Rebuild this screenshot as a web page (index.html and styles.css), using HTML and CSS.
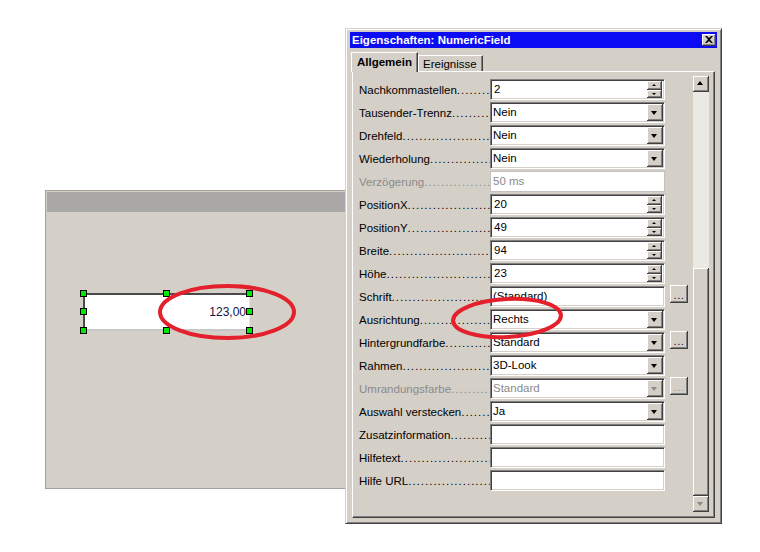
FILE: index.html
```html
<!DOCTYPE html>
<html lang="de">
  <head>
    <meta charset="UTF-8" />
    <title>Eigenschaften: NumericField</title>
    <link rel="stylesheet" href="styles.css">
  </head>
  <body>
    <!-- Formular-Entwurf -->
    <div class="designer">
      <div class="ruler"></div>
      <div class="canvas">
        <div class="ctl">
          <div class="numfield">123,00</div>
          <i class="handle h-tl"></i><i class="handle h-tc"></i><i class="handle h-tr"></i>
          <i class="handle h-ml"></i><i class="handle h-mr"></i>
          <i class="handle h-bl"></i><i class="handle h-bc"></i><i class="handle h-br"></i>
        </div>
      </div>
    </div>

    <!-- Eigenschaften-Dialog -->
    <div class="dialog">
      <div class="titlebar">
        <span>Eigenschaften: NumericField</span>
        <span class="close raised">
          <svg width="8" height="7" viewBox="0 0 8 7"><path d="M0 0h2l2 2 2-2h2L5 3.5 8 7H6L4 5 2 7H0l3-3.5z" fill="#000"/></svg>
        </span>
      </div>
      <div class="tabs">
        <div class="tab active">Allgemein</div>
        <div class="tab">Ereignisse</div>
      </div>
      <div class="panel">
        <div class="rows">
          <div class="row">
            <span class="lbl">Nachkommastellen</span>
            <div class="fld spin"><span class="val">2</span><span class="spinbtn"><i class="raised up"></i><i class="raised down"></i></span></div>
          </div>
          <div class="row">
            <span class="lbl">Tausender-Trennz</span>
            <div class="fld combo"><span class="val">Nein</span><span class="drop raised"></span></div>
          </div>
          <div class="row">
            <span class="lbl">Drehfeld</span>
            <div class="fld combo"><span class="val">Nein</span><span class="drop raised"></span></div>
          </div>
          <div class="row">
            <span class="lbl">Wiederholung</span>
            <div class="fld combo"><span class="val">Nein</span><span class="drop raised"></span></div>
          </div>
          <div class="row off">
            <span class="lbl">Verzögerung</span>
            <div class="fld flat"><span class="val">50 ms</span></div>
          </div>
          <div class="row">
            <span class="lbl">PositionX</span>
            <div class="fld spin"><span class="val">20</span><span class="spinbtn"><i class="raised up"></i><i class="raised down"></i></span></div>
          </div>
          <div class="row">
            <span class="lbl">PositionY</span>
            <div class="fld spin"><span class="val">49</span><span class="spinbtn"><i class="raised up"></i><i class="raised down"></i></span></div>
          </div>
          <div class="row">
            <span class="lbl">Breite</span>
            <div class="fld spin"><span class="val">94</span><span class="spinbtn"><i class="raised up"></i><i class="raised down"></i></span></div>
          </div>
          <div class="row">
            <span class="lbl">Höhe</span>
            <div class="fld spin"><span class="val">23</span><span class="spinbtn"><i class="raised up"></i><i class="raised down"></i></span></div>
          </div>
          <div class="row">
            <span class="lbl">Schrift</span>
            <div class="fld"><span class="val">(Standard)</span></div>
            <span class="more raised">...</span>
          </div>
          <div class="row">
            <span class="lbl">Ausrichtung</span>
            <div class="fld combo"><span class="val">Rechts</span><span class="drop raised"></span></div>
          </div>
          <div class="row">
            <span class="lbl">Hintergrundfarbe</span>
            <div class="fld combo"><span class="val">Standard</span><span class="drop raised"></span></div>
            <span class="more raised">...</span>
          </div>
          <div class="row">
            <span class="lbl">Rahmen</span>
            <div class="fld combo"><span class="val">3D-Look</span><span class="drop raised"></span></div>
          </div>
          <div class="row off">
            <span class="lbl">Umrandungsfarbe</span>
            <div class="fld combo"><span class="val">Standard</span><span class="drop raised"></span></div>
            <span class="more raised">...</span>
          </div>
          <div class="row">
            <span class="lbl">Auswahl verstecken</span>
            <div class="fld combo"><span class="val">Ja</span><span class="drop raised"></span></div>
          </div>
          <div class="row">
            <span class="lbl">Zusatzinformation</span>
            <div class="fld"></div>
          </div>
          <div class="row">
            <span class="lbl">Hilfetext</span>
            <div class="fld"></div>
          </div>
          <div class="row">
            <span class="lbl">Hilfe URL</span>
            <div class="fld"></div>
          </div>
        </div>
        <div class="scrollbar">
          <span class="sb-btn raised up"></span>
          <span class="sb-track"></span>
          <span class="sb-thumb raised"></span>
          <span class="sb-btn raised down off"></span>
        </div>
      </div>
    </div>

    <!-- rote Markierungen -->
    <svg class="marks" width="760" height="552" viewBox="0 0 760 552">
      <ellipse cx="227" cy="312" rx="67" ry="26" />
      <ellipse cx="507" cy="318" rx="54" ry="19" transform="rotate(-3 507 318)" />
    </svg>
  </body>
</html>
```

FILE: styles.css
```css
* {
  box-sizing: border-box;
}
body {
  margin: 0;
  width: 760px;
  height: 552px;
  position: relative;
  overflow: hidden;
  background: #fff;
  font-family: "Liberation Sans", Arial, sans-serif;
  font-size: 11.5px;
  color: #000;
}

/* Win-Classic Knopf */
.raised {
  background: #d4d0c8;
  box-shadow: inset -1px -1px #404040, inset 1px 1px #fff,
    inset -2px -2px #808080;
}

/* Formular-Entwurf links */
.designer {
  position: absolute;
  left: 45px;
  top: 190px;
  width: 320px;
  height: 299px;
  background: #d4d0c8;
  border: 1px solid #a4a19b;
  padding: 1px;
}
.designer .ruler {
  height: 20px;
  background: #a9a8a6;
}
.designer .canvas {
  position: relative;
}
.ctl {
  position: absolute;
  left: 36px;
  top: 81px;
  width: 167px;
  height: 38px;
}
.numfield {
  width: 100%;
  height: 100%;
  background: #fff;
  border-top: 2px solid #4a4a4a;
  border-left: 2px solid #4a4a4a;
  border-right: 1px solid #e6e6e6;
  border-bottom: 2px solid #c8c8c8;
  color: #141446;
  font-size: 12px;
  text-align: right;
  padding-right: 3px;
  line-height: 34px;
}
.handle {
  position: absolute;
  width: 7px;
  height: 7px;
  background: #00e800;
  border: 1px solid #000;
}
.h-tl, .h-tc, .h-tr { top: -3px; }
.h-ml, .h-mr { top: 15px; }
.h-bl, .h-bc, .h-br { top: 34px; }
.h-tl, .h-ml, .h-bl { left: -3px; }
.h-tc, .h-bc { left: 80px; }
.h-tr, .h-mr, .h-br { left: 163px; }

/* Dialog */
.dialog {
  position: absolute;
  left: 345px;
  top: 28px;
  width: 377px;
  height: 496px;
  background: #d4d0c8;
  border: 1px solid;
  border-color: #d4d0c8 #404040 #404040 #d4d0c8;
  box-shadow: inset 1px 1px #fff, inset -1px -1px #808080;
  padding: 3px 4px 5px 4px;
  display: flex;
  flex-direction: column;
  z-index: 2;
}
.titlebar {
  height: 16px;
  background: #0c0cf4;
  color: #fff;
  font-weight: bold;
  padding-left: 2px;
  display: flex;
  align-items: center;
  justify-content: space-between;
}
.close {
  width: 14px;
  height: 12px;
  margin-right: 1px;
  display: flex;
  align-items: center;
  justify-content: center;
  padding: 0 1px 1px 0;
}
.close svg {
  display: block;
}

.tabs {
  display: flex;
  align-items: flex-end;
  height: 19px;
  margin: 4px 2px 0 1px;
}
.tab {
  height: 16px;
  padding: 0 5px 0 4px;
  line-height: 16px;
  white-space: nowrap;
  border-top: 1px solid #fff;
  border-left: 1px solid #fff;
  border-right: 1px solid #404040;
  box-shadow: inset -1px 0 #808080;
}
.tab.active {
  height: 20px;
  width: 67px;
  margin-bottom: -1px;
  padding-left: 5px;
  line-height: 19px;
  font-weight: bold;
  position: relative;
  z-index: 1;
  background: #d4d0c8;
}

.panel {
  flex: 1;
  margin: 0 2px 0 2px;
  border: 1px solid;
  border-color: #fff #404040 #404040 #fff;
  box-shadow: inset -1px -1px #808080;
  padding: 4px 5px 5px 6px;
  display: flex;
  justify-content: space-between;
}

.rows {
  width: 329px;
  margin-top: 3px;
}
.row {
  display: flex;
  align-items: flex-start;
  height: 21px;
  margin-bottom: 2px;
}
.lbl {
  width: 131px;
  height: 21px;
  line-height: 23px;
  white-space: nowrap;
  overflow: hidden;
}
.lbl::after {
  content: "..............................................";
  letter-spacing: 1px;
}
.row.off .lbl,
.row.off .val {
  color: #8a8a8a;
}

.fld {
  width: 175px;
  height: 21px;
  background: #fff;
  border: 1px solid;
  border-color: #808080 #fff #fff #808080;
  box-shadow: inset 1px 1px #404040, inset -1px -1px #d4d0c8;
  padding: 1px;
  display: flex;
  align-items: center;
}
.fld.flat {
  border-color: #c4c1ba;
  box-shadow: none;
}
.val {
  flex: 1;
  line-height: 17px;
  padding-left: 1px;
  white-space: nowrap;
  overflow: hidden;
}
.spin .val {
  padding-left: 2px;
}

.drop {
  width: 16px;
  height: 17px;
  position: relative;
}
.drop::before {
  content: "";
  position: absolute;
  left: 4px;
  top: 7px;
  border-left: 3.5px solid transparent;
  border-right: 3.5px solid transparent;
  border-top: 4px solid #000;
}
.row.off .drop::before {
  border-top-color: #8a8a8a;
}

.spinbtn {
  width: 15px;
  height: 17px;
  margin-right: 1px;
  display: flex;
  flex-direction: column;
}
.spinbtn i {
  flex: 1;
  position: relative;
}
.spinbtn i::before {
  content: "";
  position: absolute;
  left: 5px;
  top: 3px;
  border-left: 2px solid transparent;
  border-right: 2px solid transparent;
}
.spinbtn .up::before {
  border-bottom: 2px solid #000;
}
.spinbtn .down::before {
  border-top: 2px solid #000;
}

.more {
  width: 18px;
  height: 18px;
  margin-left: 5px;
  margin-top: -1px;
  text-align: center;
  line-height: 20px;
  color: #10104a;
  letter-spacing: 0.5px;
}
.row.off .more {
  color: #9a9a9a;
}

.scrollbar {
  width: 16px;
  display: flex;
  flex-direction: column;
}
.sb-btn {
  height: 16px;
  position: relative;
}
.sb-btn::before {
  content: "";
  position: absolute;
  left: 4px;
  border-left: 3.5px solid transparent;
  border-right: 3.5px solid transparent;
}
.sb-btn.up::before {
  top: 5px;
  border-bottom: 4px solid #000;
}
.sb-btn.down::before {
  top: 6px;
  border-top: 4px solid #8a8a8a;
}
.sb-track {
  height: 176px;
  background: #ebe9e4;
}
.sb-thumb {
  flex: 1;
}

/* rote Ellipsen */
.marks {
  position: absolute;
  left: 0;
  top: 0;
  z-index: 5;
  pointer-events: none;
}
.marks ellipse {
  fill: none;
  stroke: #e3202b;
  stroke-width: 4;
}
```
